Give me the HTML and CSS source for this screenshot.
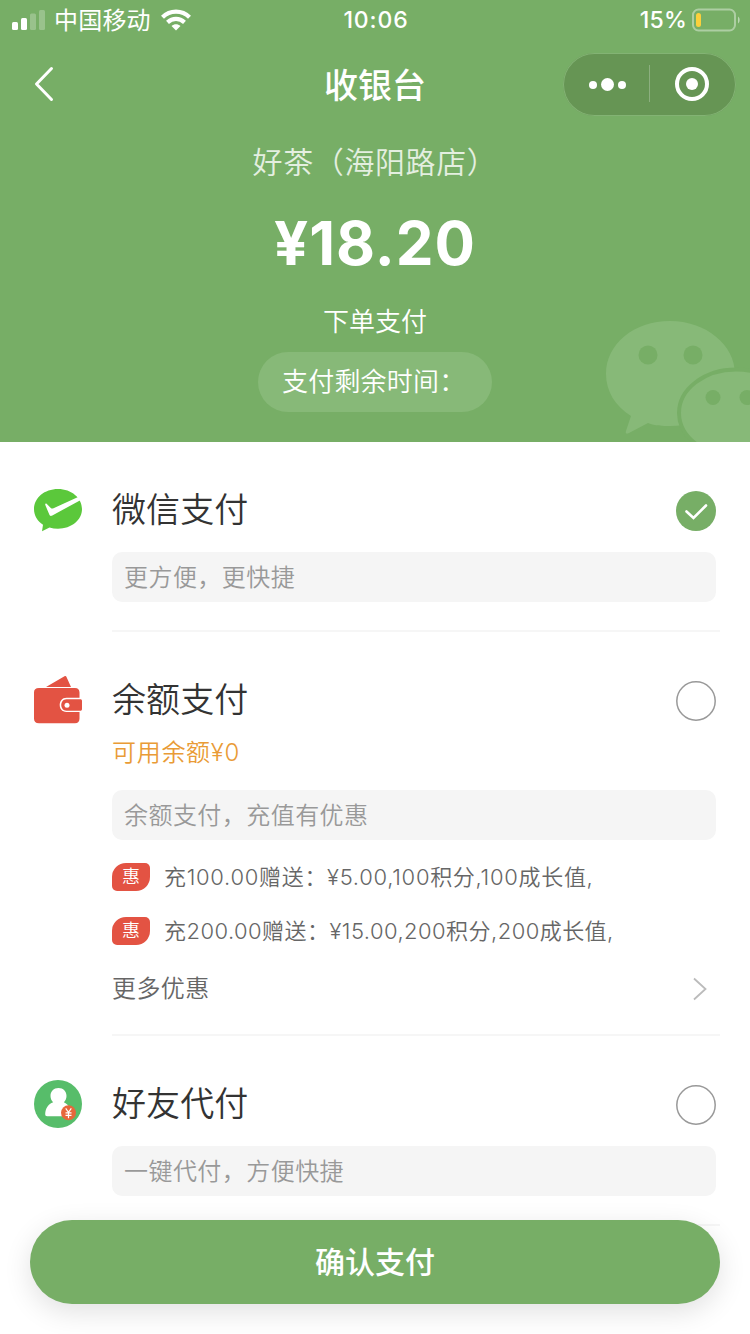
FILE: index.html
```html
<!DOCTYPE html>
<html lang="zh-CN">
<head>
<meta charset="utf-8">
<title>收银台</title>
<link rel="stylesheet" href="styles.css">
</head>
<body>
<div class="page">
  <header class="hero">
    <svg class="hero-mark" viewBox="0 0 150 132" width="150" height="132">
      <path class="mark-fill" d="M70 11C34 11 6 34 6 64c0 17 9 32 25 42l-5 15c-1 3 1 3 3 2l19-10c7 3 15 3 22 3 36 0 65-23 65-52S106 11 70 11z"/>
      <ellipse class="mark-front" cx="136" cy="103" rx="57" ry="43.500"/>
      <g class="mark-eye"><circle cx="48" cy="45" r="9.500"/><circle cx="93" cy="45" r="9.500"/><circle cx="113" cy="87.500" r="7.500"/><circle cx="147" cy="87.500" r="7.500"/></g>
    </svg>
    <div class="status">
      <div class="carrier">
        <svg width="34" height="20" viewBox="0 0 34 20"><g fill="#fff"><rect x="0" y="12" width="6" height="8" rx="1.500"/><rect x="9" y="8" width="6" height="12" rx="1.500"/><g opacity=".25"><rect x="18" y="3.500" width="6" height="16.500" rx="1.500"/><rect x="27" y="0" width="6" height="20" rx="1.500"/></g></g></svg>
        <span class="carrier-name">中国移动</span>
        <svg class="wifi" width="30" height="22" viewBox="0 0 30 22"><g fill="none" stroke="#fff" stroke-width="4.200"><path d="M1.500 8.200C9 .8 21 .8 28.500 8.200"/><path d="M6.500 13.400C11.500 8.800 18.500 8.800 23.500 13.400"/></g><path fill="#fff" d="M10.500 17c2.800-2.400 6.200-2.400 9 0L15 21.500z"/></svg>
      </div>
      <span class="clock">10:06</span>
      <div class="power">
        <span class="percent">15%</span>
        <svg width="48" height="24" viewBox="0 0 48 24"><rect x="1" y="1.500" width="42" height="21" rx="5.500" fill="none" stroke="#fff" stroke-opacity=".4" stroke-width="2"/><rect x="4" y="5" width="5" height="14" rx="2.500" fill="#fbd03c"/><path d="M46 8.500v7c2.200-1.500 2.200-5.500 0-7z" fill="#fff" fill-opacity=".5"/></svg>
      </div>
    </div>
    <nav class="nav">
      <svg class="back" width="22" height="36" viewBox="0 0 22 36"><path d="M18.500 2.500L3.500 18l15 15.500" fill="none" stroke="#fff" stroke-width="3" stroke-linecap="round" stroke-linejoin="round"/></svg>
      <h1 class="nav-title">收银台</h1>
      <div class="capsule">
        <svg width="173" height="63" viewBox="0 0 173 63"><g fill="#fff"><circle cx="30" cy="32" r="4"/><circle cx="44.500" cy="31.500" r="6.500"/><circle cx="59" cy="32" r="4"/><circle cx="129" cy="31" r="6"/></g><path d="M86.500 12v37" stroke="#fff" stroke-opacity=".25"/><circle cx="129" cy="31" r="15" fill="none" stroke="#fff" stroke-width="4"/></svg>
      </div>
    </nav>
    <p class="store">好茶（海阳路店）</p>
    <p class="amount">¥18.20</p>
    <p class="order">下单支付</p>
    <p class="timer">支付剩余时间：</p>
  </header>

  <main>
    <section class="method">
      <svg class="method-icon" width="48" height="48" viewBox="0 0 48 48"><path fill="#5bc83b" d="M24 3C10.500 3 0 11.800 0 23c0 6.500 3.500 12.200 9 15.800L8 45.200l7.500-3.700c2.700.8 5.500 1.200 8.500 1.200 13.500 0 24-8.700 24-19.700S37.500 3 24 3z"/><path fill="#fff" d="M12.600 17.800l4.200 4.100c.8.800 1.500.9 2.700.3L45.200 10.600l1.600 3.300L18.300 29.500c-1.500.7-2.500.5-3-.9l-4-9.600c-.4-1 .3-1.900 1.300-1.200z"/></svg>
      <div class="method-body">
        <div class="method-head"><h2 class="method-title">微信支付</h2>
          <svg class="radio" width="40" height="40" viewBox="0 0 40 40"><circle cx="20" cy="20" r="20" fill="#77ae66"/><path d="M10.500 20.500l7 6.500L30 14.500" fill="none" stroke="#fff" stroke-width="2.600" stroke-linecap="round"/></svg></div>
        <p class="note">更方便，更快捷</p>
      </div>
    </section>

    <section class="method">
      <svg class="method-icon" width="48" height="48" viewBox="0 0 48 48"><g fill="#e35343"><path d="M12 11L30.500.300c1-.6 1.600-.2 2 .8L37 11z"/><path d="M5 12h36c3 0 4.500 2 4.500 4.500v5.300H32.500c-9 0-9 14.200 0 14.200h13v6.500c0 3-1.500 4.700-4.500 4.700H5c-3.500 0-5-1.700-5-4.700v-26C0 13.500 1.500 12 5 12z"/><path d="M32.500 23.200H46c1.500 0 2 .5 2 2v7.500c0 1.500-.5 2-2 2H32.500c-7 0-7-11.500 0-11.500z"/></g><circle cx="33" cy="29.200" r="2.500" fill="#fff"/></svg>
      <div class="method-body">
        <div class="method-head"><h2 class="method-title">余额支付</h2>
          <svg class="radio" width="40" height="40" viewBox="0 0 40 40"><circle cx="20" cy="20" r="19.200" fill="none" stroke="#999" stroke-width="1.500"/></svg></div>
        <p class="balance">可用余额¥0</p>
        <p class="note note-balance">余额支付，充值有优惠</p>
        <ul class="promos">
          <li class="promo"><span class="tag">惠</span><span class="promo-text promo-text-wide">充100.00赠送：¥5.00,100积分,100成长值,</span></li>
          <li class="promo"><span class="tag">惠</span><span class="promo-text">充200.00赠送：¥15.00,200积分,200成长值,</span></li>
        </ul>
        <div class="more"><span>更多优惠</span><svg width="16" height="26" viewBox="0 0 16 26"><path d="M2 2.500L13.500 13 2 23.500" fill="none" stroke="#bbb" stroke-width="1.800"/></svg></div>
      </div>
    </section>

    <section class="method">
      <svg class="method-icon" width="48" height="48" viewBox="0 0 48 48"><circle cx="24" cy="24" r="24" fill="#57bd6a"/><path fill="#fff" d="M24.500 8c-4.800 0-8 3.500-8 8 0 2.600 1 4.600 2.700 6.200-5 2-7.700 6-8 11.800 0 1.500.6 2.200 2 2.200H36V28c-1.700-3-3.700-4.800-6.200-5.800 1.700-1.600 2.700-3.600 2.700-6.200 0-4.500-3.200-8-8-8z"/><circle cx="34.500" cy="32.800" r="7.500" fill="#e7673b"/><path d="M31.700 28.300l2.800 4 2.800-4M34.500 32.300v6M31.500 32.800h6M31.500 35.300h6" fill="none" stroke="#fff" stroke-width="1.200"/></svg>
      <div class="method-body">
        <div class="method-head"><h2 class="method-title">好友代付</h2>
          <svg class="radio" width="40" height="40" viewBox="0 0 40 40"><circle cx="20" cy="20" r="19.200" fill="none" stroke="#999" stroke-width="1.500"/></svg></div>
        <p class="note">一键代付，方便快捷</p>
      </div>
    </section>
  </main>

  <button class="confirm">确认支付</button>
</div>
</body>
</html>
```
FILE: styles.css
```css
* { box-sizing: border-box; margin: 0; padding: 0; }
body { background: #fff; color: #333; font-family: Inter, "Noto Sans CJK SC", sans-serif; }
svg { display: block; flex: none; }
.page { position: relative; width: 750px; height: 1334px; overflow: hidden; }

.hero { position: relative; height: 442px; overflow: hidden; background: #77ae66; color: #fff; text-align: center; }
.hero-mark { position: absolute; right: 0; bottom: 0; }
.mark-fill { fill: #87b978; }
.mark-front { fill: #87b978; stroke: #77ae66; stroke-width: 4; }
.mark-eye { fill: #77ae66; }

.status { position: relative; display: grid; grid-template-columns: 1fr auto 1fr; align-items: center; height: 40px; padding: 0 10px 0 12px; font-size: 24px; line-height: 40px; }
.carrier { display: flex; align-items: center; height: 40px; }
.carrier-name { margin-left: 8px; font-weight: 400; line-height: 38px; padding-top: 2px; letter-spacing: 0.2px; }
.wifi { margin-left: 10px; }
.clock { font-size: 23px; font-weight: 450; letter-spacing: 0.9px; }
.power { display: flex; justify-content: flex-end; align-items: center; gap: 5px; height: 40px; }
.percent { font-size: 23px; font-weight: 450; letter-spacing: 0.2px; }

.nav { position: relative; display: grid; grid-template-columns: 1fr auto 1fr; align-items: center; height: 88px; padding: 0 14px; }
.back { margin-left: 19px; }
.nav-title { font-size: 34px; font-weight: 500; line-height: 48px; padding-top: 3px; }
.capsule { justify-self: end; width: 173px; height: 63px; border-radius: 32px; background: #669554; box-shadow: inset 0 0 0 1px #83b374; }

.store { height: 66px; padding-top: 1px; font-size: 30px; line-height: 66px; font-weight: 350; letter-spacing: 0.6px; color: #e4efe0; }
.amount { height: 98px; font-size: 60px; line-height: 98px; font-weight: 700; letter-spacing: 1px; }
.order { height: 60px; padding-top: 2px; font-size: 26px; line-height: 56px; font-weight: 350; }
.timer { width: 234px; height: 60px; margin: 0 auto; padding-left: 24px; border-radius: 30px; background: #87b978; font-size: 26px; line-height: 60px; font-weight: 350; letter-spacing: 0.2px; text-align: left; white-space: nowrap; position: relative; }

.method { display: flex; padding: 43px 30px 0 34px; }
.method-icon { margin-top: 1px; }
.method-body { flex: 1; margin-left: 30px; padding: 0 4px 28px 0; border-bottom: 2px solid #f6f6f6; }
.method-head { display: flex; justify-content: space-between; height: 48px; }
.method-title { padding-top: 1px; font-size: 34px; line-height: 48px; font-weight: 350; letter-spacing: 0.1px; }
.radio { margin-top: 6px; }
.note { height: 50px; margin-top: 19px; padding-left: 12px; border-radius: 10px; background: #f5f5f5; color: #999; font-size: 24px; line-height: 52px; font-weight: 350; letter-spacing: 0.45px; }
.note-balance { margin-top: 23px; }
.balance { margin-top: 14px; height: 30px; color: #e99b36; font-size: 24px; line-height: 31px; font-weight: 350; letter-spacing: 0.7px; }
.promos { display: grid; gap: 26px; margin-top: 23px; list-style: none; }
.promo { display: flex; align-items: center; gap: 14px; height: 28px; }
.tag { width: 38px; height: 28px; border-radius: 14px 5px 14px 5px; background: #e35343; color: #fff; font-size: 18px; line-height: 28px; text-align: center; font-weight: 350; }
.promo-text { color: #666; font-size: 22px; line-height: 28px; font-weight: 350; letter-spacing: 0.45px; white-space: nowrap; }
.promo-text-wide { letter-spacing: 0.7px; }
.more { display: flex; justify-content: space-between; align-items: center; height: 28px; margin-top: 30px; margin-bottom: 3px; padding-right: 8px; color: #666; font-size: 24px; line-height: 28px; font-weight: 350; letter-spacing: 0.4px; }

.confirm { position: absolute; left: 30px; bottom: 30px; width: 690px; height: 84px; border: 0; border-radius: 42px; background: #77ae66; box-shadow: 0 8px 28px rgba(0, 0, 0, 0.12); color: #fff; font: 500 30px/84px Inter, "Noto Sans CJK SC", sans-serif; }
```
